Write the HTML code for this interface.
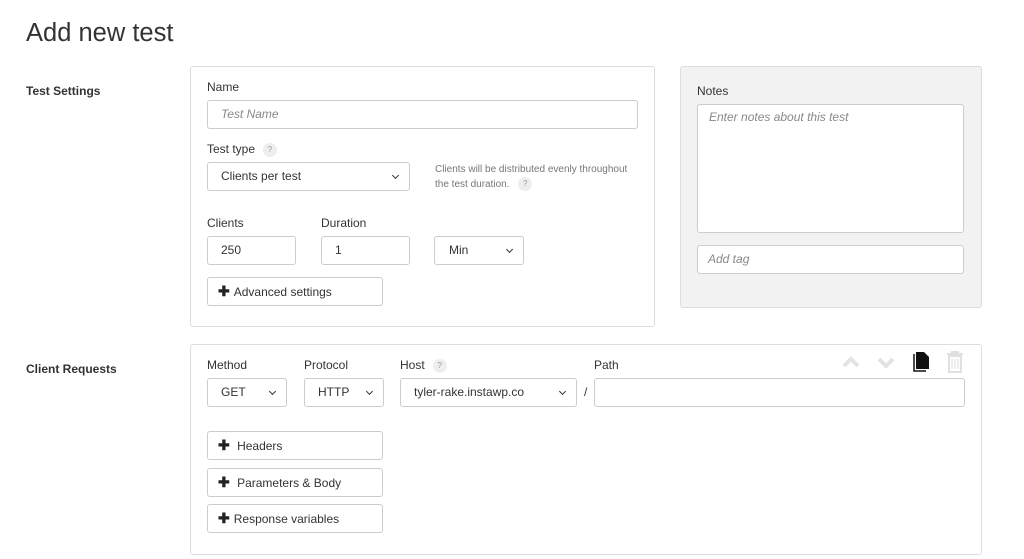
<!DOCTYPE html>
<html><head><style>
*{box-sizing:border-box;margin:0;padding:0}
body{width:1024px;height:559px;overflow:hidden;background:#fff;font-family:"Liberation Sans",sans-serif;color:#333;font-size:12px;position:relative}
.a{position:absolute}
h1{position:absolute;left:26px;top:19px;font-size:25.5px;font-weight:normal;color:#333}
.sec{font-weight:bold;font-size:12px}
.panel{border:1px solid #ddd;border-radius:3px;background:#fff}
.inp{position:absolute;border:1px solid #ccc;border-radius:3px;height:29px;background:#fff;padding:0 13px;line-height:27px;font-size:12px;color:#333}
.ph{color:#888;font-style:italic}
.sel::after{content:"";position:absolute;right:11px;top:10px;width:4px;height:4px;border-right:1.5px solid #333;border-bottom:1.5px solid #333;transform:rotate(45deg)}
.lbl{position:absolute;font-size:12px;color:#333}
.q{display:inline-block;width:14px;height:14px;border-radius:50%;background:#eee;color:#999;font-size:8px;text-align:center;line-height:14px;vertical-align:middle;margin-left:8px}
.btn{position:absolute;border:1px solid #ccc;border-radius:3px;width:176px;height:29px;line-height:27px;padding-left:10px;font-size:12px;color:#333;background:#fff}
.btn b{font-size:14px;margin-right:4px;color:#222}
</style></head><body>
<h1>Add new test</h1>
<div class="a sec" style="left:26px;top:84px">Test Settings</div>
<div class="a panel" style="left:190px;top:66px;width:465px;height:261px"></div>
<div class="lbl" style="left:207px;top:80px">Name</div>
<div class="inp ph" style="left:207px;top:100px;width:431px">Test Name</div>
<div class="lbl" style="left:207px;top:142px">Test type<span class="q">?</span></div>
<div class="inp sel" style="left:207px;top:162px;width:203px">Clients per test</div>
<div class="lbl" style="left:435px;top:162px;font-size:10px;color:#777;line-height:15px">Clients will be distributed evenly throughout<br>the test duration. <span class="q" style="margin-left:6px">?</span></div>
<div class="lbl" style="left:207px;top:216px">Clients</div>
<div class="lbl" style="left:321px;top:216px">Duration</div>
<div class="inp" style="left:207px;top:236px;width:89px">250</div>
<div class="inp" style="left:321px;top:236px;width:89px">1</div>
<div class="inp sel" style="left:434px;top:236px;width:90px;padding-left:14px">Min</div>
<div class="btn" style="left:207px;top:277px"><b>✚</b>Advanced settings</div>

<div class="a" style="left:680px;top:66px;width:302px;height:242px;background:#f2f2f2;border:1px solid #ddd;border-radius:3px"></div>
<div class="lbl" style="left:697px;top:84px">Notes</div>
<div class="inp ph" style="left:697px;top:104px;width:267px;height:129px;line-height:25px;padding-left:11px">Enter notes about this test</div>
<div class="inp ph" style="left:697px;top:245px;width:267px;padding-left:10px">Add tag</div>

<div class="a sec" style="left:26px;top:362px">Client Requests</div>
<div class="a panel" style="left:190px;top:344px;width:792px;height:211px"></div>
<div class="lbl" style="left:207px;top:358px">Method</div>
<div class="lbl" style="left:304px;top:358px">Protocol</div>
<div class="lbl" style="left:400px;top:358px">Host<span class="q">?</span></div>
<div class="lbl" style="left:594px;top:358px">Path</div>
<div class="inp sel" style="left:207px;top:378px;width:80px">GET</div>
<div class="inp sel" style="left:304px;top:378px;width:80px">HTTP</div>
<div class="inp sel" style="left:400px;top:378px;width:177px">tyler-rake.instawp.co</div>
<div class="lbl" style="left:584px;top:385px">/</div>
<div class="inp" style="left:594px;top:378px;width:371px"></div>
<svg class="a" style="left:840px;top:350px" width="130" height="24">
<path d="M4 16 L11 9 L18 16" stroke="#e3e3e3" stroke-width="4" fill="none"/>
<path d="M39 9 L46 16 L53 9" stroke="#e3e3e3" stroke-width="4" fill="none"/>
<path d="M76 2 H84 L89 7 V19 H76 Z" fill="#111"/>
<path d="M74 4 V21 H86" stroke="#111" stroke-width="1.5" fill="none"/>
<path d="M107 4 H123 M112 4 V2 H118 V4 M109 6 H121 V22 H109 Z" stroke="#e0e0e0" stroke-width="2" fill="none"/>
<path d="M112 9 V19 M115 9 V19 M118 9 V19" stroke="#e0e0e0" stroke-width="1.2"/>
</svg>
<div class="btn" style="left:207px;top:431px"><b>✚</b> Headers</div>
<div class="btn" style="left:207px;top:468px"><b>✚</b> Parameters &amp; Body</div>
<div class="btn" style="left:207px;top:504px"><b>✚</b>Response variables</div>
</body></html>
